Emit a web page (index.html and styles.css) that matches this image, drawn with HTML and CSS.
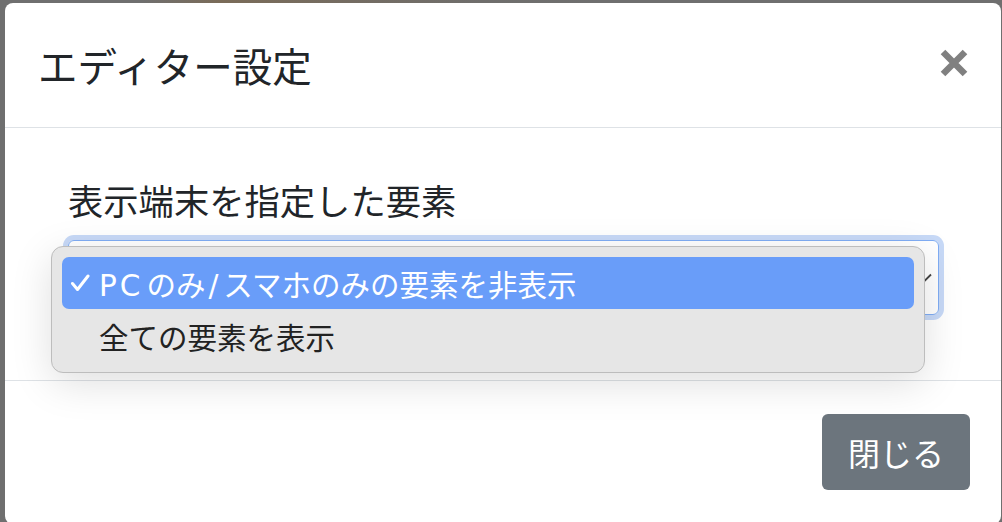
FILE: index.html
```html
<!DOCTYPE html>
<html lang="ja">
<head>
<meta charset="utf-8">
<title>エディター設定</title>
<link rel="stylesheet" href="styles.css">
</head>
<body>
<div class="modal">
  <div class="modal-header">
    <h5 class="modal-title">エディター設定</h5>
    <button class="close" type="button" aria-label="Close">
      <svg width="28" height="28" viewBox="0 0 28 28"><path d="M3 3 L25 25 M25 3 L3 25" stroke="#808080" stroke-width="6.5" fill="none"/></svg>
    </button>
  </div>
  <div class="modal-body">
    <label class="form-label">表示端末を指定した要素</label>
    <div class="select-wrap">
      <div class="select">
        <span class="select-text">PCのみ/スマホのみの要素を非表示</span>
        <svg class="chevron" width="20" height="12" viewBox="0 0 20 12"><path d="M1 1.5 L10 10.5 L19 1.5" stroke="#444" stroke-width="1.8" fill="none"/></svg>
      </div>
      <div class="popup">
        <div class="option selected">
          <svg class="check" width="20" height="18" viewBox="0 0 20 18"><path d="M2.5 9.5 L7.5 15.5 L18 2" stroke="#fff" stroke-width="3" fill="none" stroke-linecap="round" stroke-linejoin="round"/></svg>
          <span><span class="latin pc">PC</span>のみ<span class="latin slash">/</span>スマホのみの要素を非表示</span>
        </div>
        <div class="option">
          <span>全ての要素を表示</span>
        </div>
      </div>
    </div>
  </div>
  <div class="modal-footer">
    <button class="btn" type="button">閉じる</button>
  </div>
</div>
</body>
</html>
```
FILE: styles.css
```css
html, body {
  margin: 0;
  padding: 0;
  height: 100%;
  overflow: hidden;
}
body {
  background: linear-gradient(to right, #6f6f6f 0%, #6f6f6f 14%, #7a6b58 22%, #746c62 35%, #6f6e6c 48%, #6f6f6f 60%, #6f6f6f 100%);
  font-family: "Noto Sans CJK JP", "Noto Sans", sans-serif;
  color: #212529;
}
.modal {
  margin: 3px 1px 0 5px;
  height: 521px;
  background: #fff;
  border-radius: 8px;
  display: flex;
  flex-direction: column;
}
.modal-header {
  height: 125px;
  box-sizing: border-box;
  display: flex;
  align-items: center;
  justify-content: space-between;
  padding: 0 33px 0 33px;
  border-bottom: 1px solid #dee2e6;
  flex: none;
}
.modal-title {
  margin: 0;
  font-size: 39.5px;
  font-weight: 400;
  line-height: 1.5;
  color: #212529;
}
.close {
  border: 0;
  background: none;
  padding: 0;
  margin-top: -4px;
  width: 28px;
  height: 28px;
  display: flex;
}
.modal-body {
  height: 252px;
  box-sizing: border-box;
  padding: 46px 62px 0 63px;
  flex: none;
}
.form-label {
  display: block;
  font-size: 35.3px;
  line-height: 52px;
  margin-bottom: 14px;
}
.select-wrap {
  position: relative;
}
.select {
  height: 75px;
  box-sizing: border-box;
  border: 1px solid #80adf4;
  border-radius: 6px;
  box-shadow: 0 0 0 5px #c7d9f7;
  display: flex;
  align-items: center;
  justify-content: space-between;
  padding: 0 6px 0 20px;
  font-size: 29px;
}
.select-text {
  color: #212529;
  visibility: hidden;
}
.chevron {
  margin-top: 2px;
}
.popup {
  position: absolute;
  left: -17px;
  top: 6px;
  width: 874px;
  box-sizing: border-box;
  padding: 10px;
  background: #e6e6e6;
  border: 1px solid #bdbdbd;
  border-radius: 12px;
  box-shadow: 0 10px 40px rgba(0, 0, 0, 0.13);
  font-size: 29.5px;
}
.option {
  height: 52px;
  display: flex;
  align-items: center;
  padding-left: 37px;
  border-radius: 7px;
  color: #222;
  position: relative;
}
.option:last-child {
  margin-top: 1px;
}
.option.selected {
  background: #699df9;
  color: #fff;
}
.latin {
  font-family: "DejaVu Sans", "Noto Sans", sans-serif;
  font-weight: 400;
}
.pc {
  letter-spacing: 3px;
  margin-right: 3px;
}
.slash {
  padding: 0 5px 0 3px;
}
.check {
  position: absolute;
  left: 8px;
  top: 17px;
}
.modal-footer {
  border-top: 1px solid #dee2e6;
  display: flex;
  justify-content: flex-end;
  padding: 33px 31px 0 0;
}
.btn {
  font-family: "Noto Sans CJK JP", "Noto Sans", sans-serif;
  font-size: 32px;
  line-height: 48px;
  padding: 14px 26px;
  border: 0;
  border-radius: 6px;
  background: #6c757d;
  color: #fff;
  width: 148px;
}
```
